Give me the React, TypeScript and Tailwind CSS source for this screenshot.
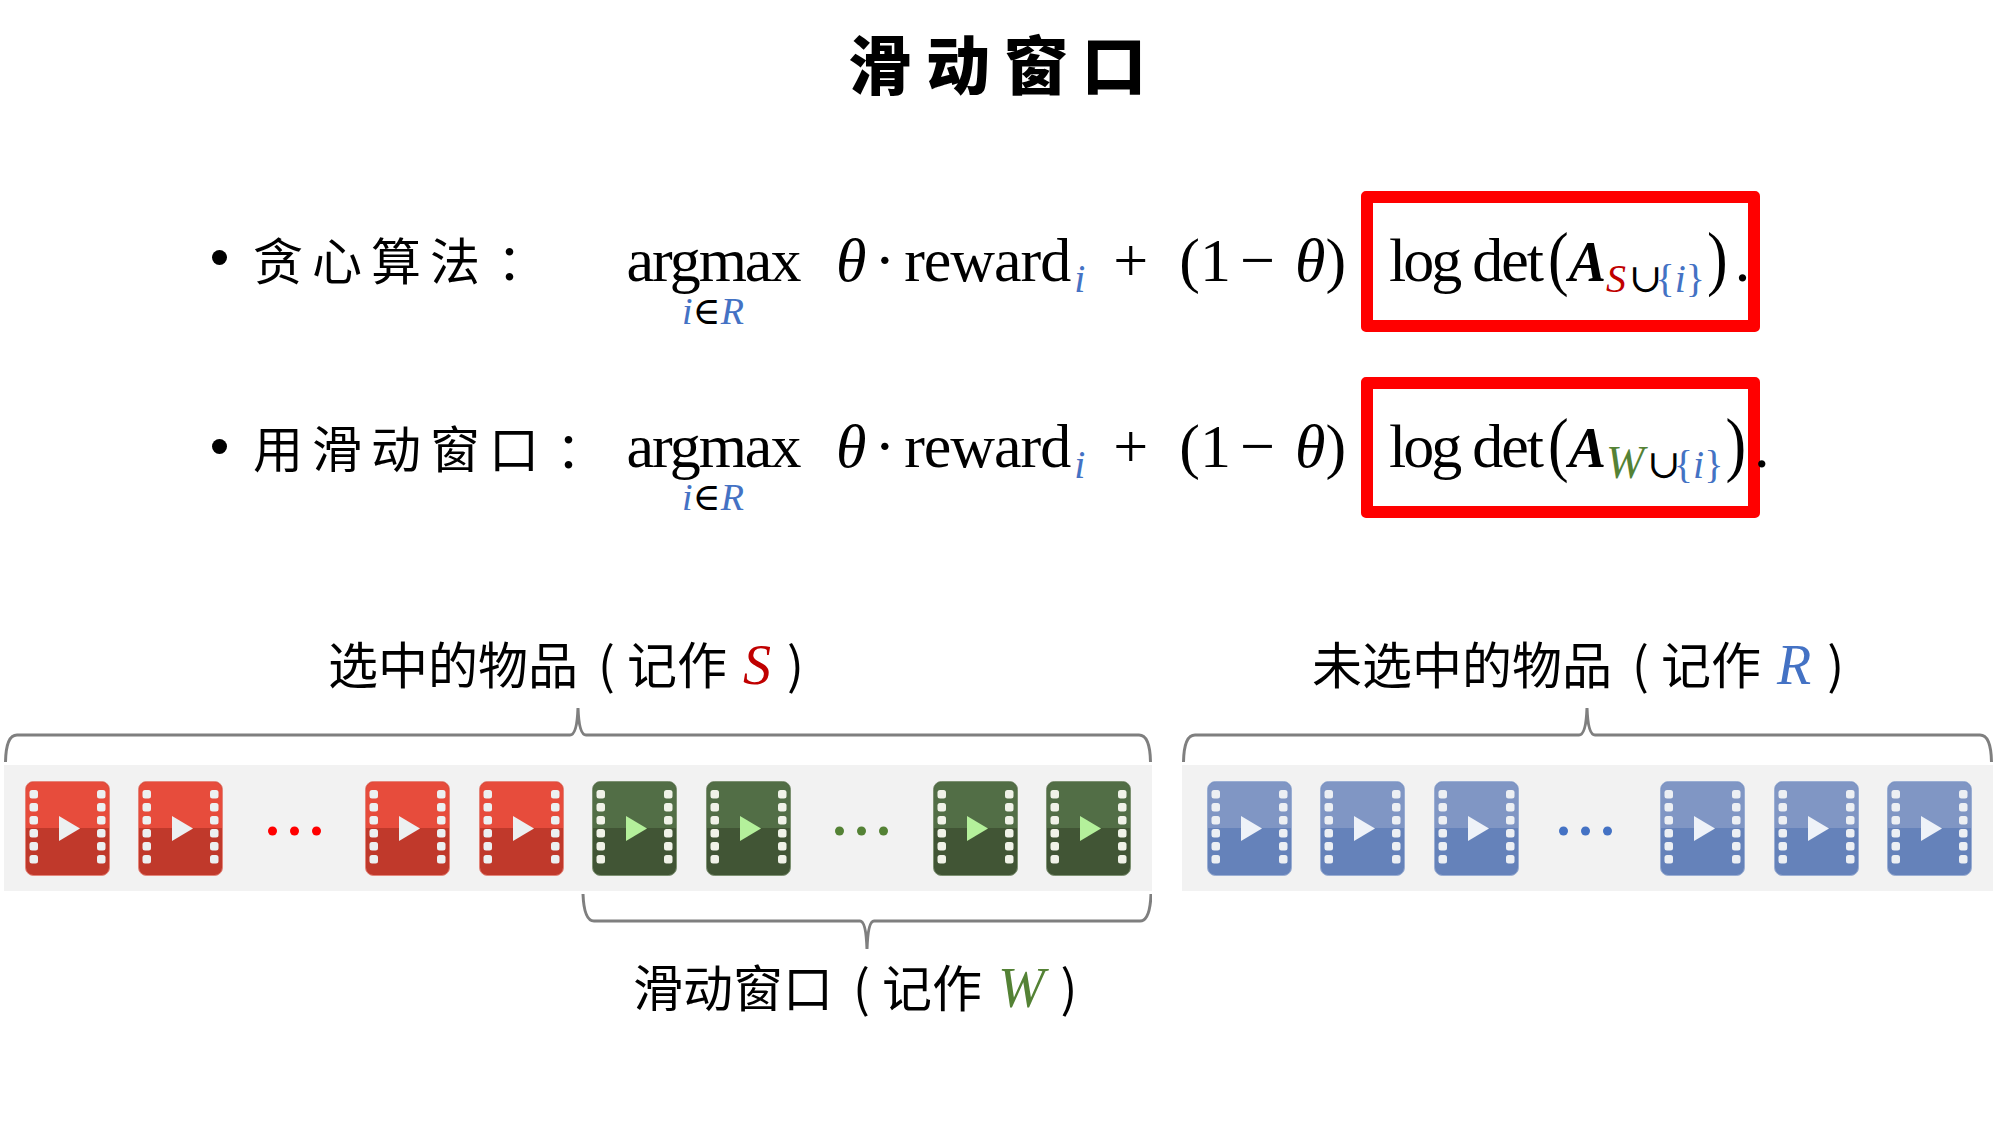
import React from "react";

const serif = "font-['Liberation_Serif','DejaVu_Serif',serif]";
const cjk = "font-['Noto_Sans_CJK_SC',sans-serif]";

type Tone = { top: string; bottom: string; play: string; hole: string; edge: string };
const RED: Tone = { top: "#e74c3c", bottom: "#c0392b", play: "#ecf0f1", hole: "#ecf0f1", edge: "#e4857a" };
const GREEN: Tone = { top: "#526e46", bottom: "#415535", play: "#b4f09b", hole: "#f0f2e8", edge: "#7d9172" };
const BLUE: Tone = { top: "#8096c4", bottom: "#6582ba", play: "#eef2f8", hole: "#eceff3", edge: "#9aaed3" };

function FilmIcon({ tone }: { tone: Tone }) {
  const rows = [9, 22, 35, 48, 61, 74];
  return (
    <svg width="85" height="95" viewBox="0 0 85 95" className="shrink-0 block">
      <rect x="0.5" y="0.5" width="84" height="94" rx="8" fill={tone.bottom} stroke={tone.edge} strokeWidth="1" />
      <path d="M1 47 V9 A8 8 0 0 1 9 1 H76 A8 8 0 0 1 84 9 V47 Z" fill={tone.top} />
      {rows.map((y) => (
        <g key={y}>
          <rect x="4.5" y={y} width="8.5" height="8.5" rx="2.5" fill={tone.hole} />
          <rect x="72" y={y} width="8.5" height="8.5" rx="2.5" fill={tone.hole} />
        </g>
      ))}
      <path d="M34 35 L55 47.5 L34 60 Z" fill={tone.play} />
    </svg>
  );
}

function Dots({ color, shift = 0 }: { color: string; shift?: number }) {
  return (
    <svg width="85" height="95" viewBox="0 0 85 95" className="shrink-0 block">
      <circle cx={20.5 + shift} cy="50" r="4.5" fill={color} />
      <circle cx={42.5 + shift} cy="50" r="4.5" fill={color} />
      <circle cx={64.5 + shift} cy="50" r="4.5" fill={color} />
    </svg>
  );
}

function Bracket({ width, height, d }: { width: number; height: number; d: string }) {
  return (
    <svg width={width} height={height} viewBox={`0 0 ${width} ${height}`} className="block">
      <path d={d} fill="none" stroke="#7f7f7f" strokeWidth="3" />
    </svg>
  );
}

function Sub({ children, className = "" }: { children: React.ReactNode; className?: string }) {
  return <span className={`text-[40px] tracking-normal relative top-[11px] ${className}`}>{children}</span>;
}

function Paren({ children, className = "" }: { children: string; className?: string }) {
  return <span className={`inline-block scale-y-[1.15] origin-[50%_67%] ${className}`}>{children}</span>;
}

function Formula({ script, scriptClass, closeClass, dotClass }: { script: string; scriptClass: string; closeClass: string; dotClass: string }) {
  return (
    <div className={`flex items-start h-full ${serif} text-[62px] leading-[66px] text-black`}>
      <div className="flex items-baseline w-[735px] shrink-0 pt-[36px] whitespace-nowrap">
        <div className="flex flex-col items-center w-[174px] tracking-[-2px]">
          <span>argmax</span>
          <span className="text-[38px] leading-[30px] mt-[3px] tracking-normal text-[#4472c4]">
            <i>i</i>
            <span className="text-black">∈</span>
            <i>R</i>
          </span>
        </div>
        <i className="ml-[36px]">θ</i>
        <span className="ml-[8px]">·</span>
        <span className="ml-[9px] tracking-[-1px]">reward</span>
        <Sub className="ml-[4px] text-[#4472c4] italic">i</Sub>
        <span className="ml-[28px]">+</span>
        <span className="ml-[31px]">(</span>
        <span>1</span>
        <span className="ml-[9px]">−</span>
        <i className="ml-[20px]">θ</i>
        <span>)</span>
      </div>
      <div className="w-[399px] h-[141px] shrink-0 border-[12px] border-[#ff0000] rounded-[5px] flex items-baseline pl-[16px] pt-[24px] whitespace-nowrap">
        <span className="tracking-[-3px]">log</span>
        <span className="ml-[13px] tracking-[-2px]">det</span>
        <Paren className="ml-[6px]">(</Paren>
        <b className="italic text-[56px]">A</b>
        <Sub className={`${scriptClass}`}>{script}</Sub>
        <Sub className="ml-[3px] text-[34px] text-black">∪</Sub>
        <Sub className="-ml-[7px] text-[38px] text-[#4472c4]">
          {"{"}
          <i>i</i>
          {"}"}
        </Sub>
        <Paren className={closeClass}>)</Paren>
        <span className={dotClass}>.</span>
      </div>
    </div>
  );
}

function Row({ label, bulletClass, labelClass, children }: { label: string; bulletClass: string; labelClass: string; children: React.ReactNode }) {
  return (
    <div className="flex items-center h-[141px] pl-[212px]">
      <span className={`w-[15px] h-[15px] rounded-full bg-black shrink-0 ${bulletClass}`} />
      <span className={`ml-[26px] w-[373px] shrink-0 ${cjk} text-[50px] tracking-[9px] leading-none text-black whitespace-nowrap ${labelClass}`}>
        {label}
        <span className="ml-[8px]">：</span>
      </span>
      {children}
    </div>
  );
}

function Label({ className, before, script, scriptClass }: { className: string; before: string; script: string; scriptClass: string }) {
  return (
    <div className={`${cjk} text-[50px] leading-[56px] text-black whitespace-nowrap flex items-baseline ${className}`}>
      <span>{before}</span>
      <span className="ml-[20px]">(</span>
      <span className="ml-[12px]">记作</span>
      <i className={`${serif} ml-[16px] text-[56px] ${scriptClass}`}>{script}</i>
      <span className="ml-[16px]">)</span>
    </div>
  );
}

export default function App() {
  return (
    <div className="w-[2000px] h-[1125px] bg-white overflow-hidden">
      <h1 className={`h-[122px] flex items-center justify-center ${cjk} text-[64px] font-black tracking-[14px] text-black pl-[8px] leading-none`}>
        滑动窗口
      </h1>

      <div className="mt-[69px] flex flex-col gap-[45px]">
        <Row label="贪心算法" bulletClass="-mt-[9px]" labelClass="-mt-[8px]">
          <Formula script="S" scriptClass="italic text-[#c00000] w-[22px]" closeClass="ml-[2px]" dotClass="ml-[7px]" />
        </Row>
        <Row label="用滑动窗口" bulletClass="-mt-[3px]" labelClass="-mt-[3px]">
          <Formula script="W" scriptClass="italic text-[46px] text-[#548235] w-[44px]" closeClass="ml-[2px]" dotClass="ml-[8px]" />
        </Row>
      </div>

      <div className="mt-[116px] flex pl-[4px] gap-[30px]">
        <div className="w-[1148px] shrink-0">
          <Label className="pl-[324px]" before="选中的物品" script="S" scriptClass="text-[#c00000]" />
          <div className="mt-[13px] h-[59px]">
            <Bracket width={1148} height={58} d="M1.5 56 Q2 29 13 29 H566 Q573 29 574 2 Q575 29 582 29 H1135 Q1146 29 1146.5 56" />
          </div>
          <div className="h-[126px] bg-[#f2f2f2] flex items-center justify-between px-[21px]">
            <FilmIcon tone={RED} />
            <FilmIcon tone={RED} />
            <Dots color="#ff0000" />
            <FilmIcon tone={RED} />
            <FilmIcon tone={RED} />
            <FilmIcon tone={GREEN} />
            <FilmIcon tone={GREEN} />
            <Dots color="#548235" />
            <FilmIcon tone={GREEN} />
            <FilmIcon tone={GREEN} />
          </div>
          <div className="pl-[577px] mt-[2px]">
            <Bracket width={571} height={57} d="M2 1 Q3 28 13 28 H279 Q285 28 286 56 Q287 28 293 28 H559 Q569 28 570 1" />
          </div>
          <Label className="pl-[629px] mt-[7px]" before="滑动窗口" script="W" scriptClass="text-[#548235]" />
        </div>

        <div className="w-[811px] shrink-0">
          <Label className="pl-[130px]" before="未选中的物品" script="R" scriptClass="text-[#4472c4]" />
          <div className="mt-[13px] h-[59px]">
            <Bracket width={811} height={58} d="M1.5 56 Q2 29 13 29 H397 Q404 29 405 2 Q406 29 413 29 H798 Q809 29 809.5 56" />
          </div>
          <div className="h-[126px] bg-[#f2f2f2] flex items-center justify-between pl-[25px] pr-[21px]">
            <FilmIcon tone={BLUE} />
            <FilmIcon tone={BLUE} />
            <FilmIcon tone={BLUE} />
            <Dots color="#4472c4" shift={-4} />
            <FilmIcon tone={BLUE} />
            <FilmIcon tone={BLUE} />
            <FilmIcon tone={BLUE} />
          </div>
        </div>
      </div>
    </div>
  );
}
